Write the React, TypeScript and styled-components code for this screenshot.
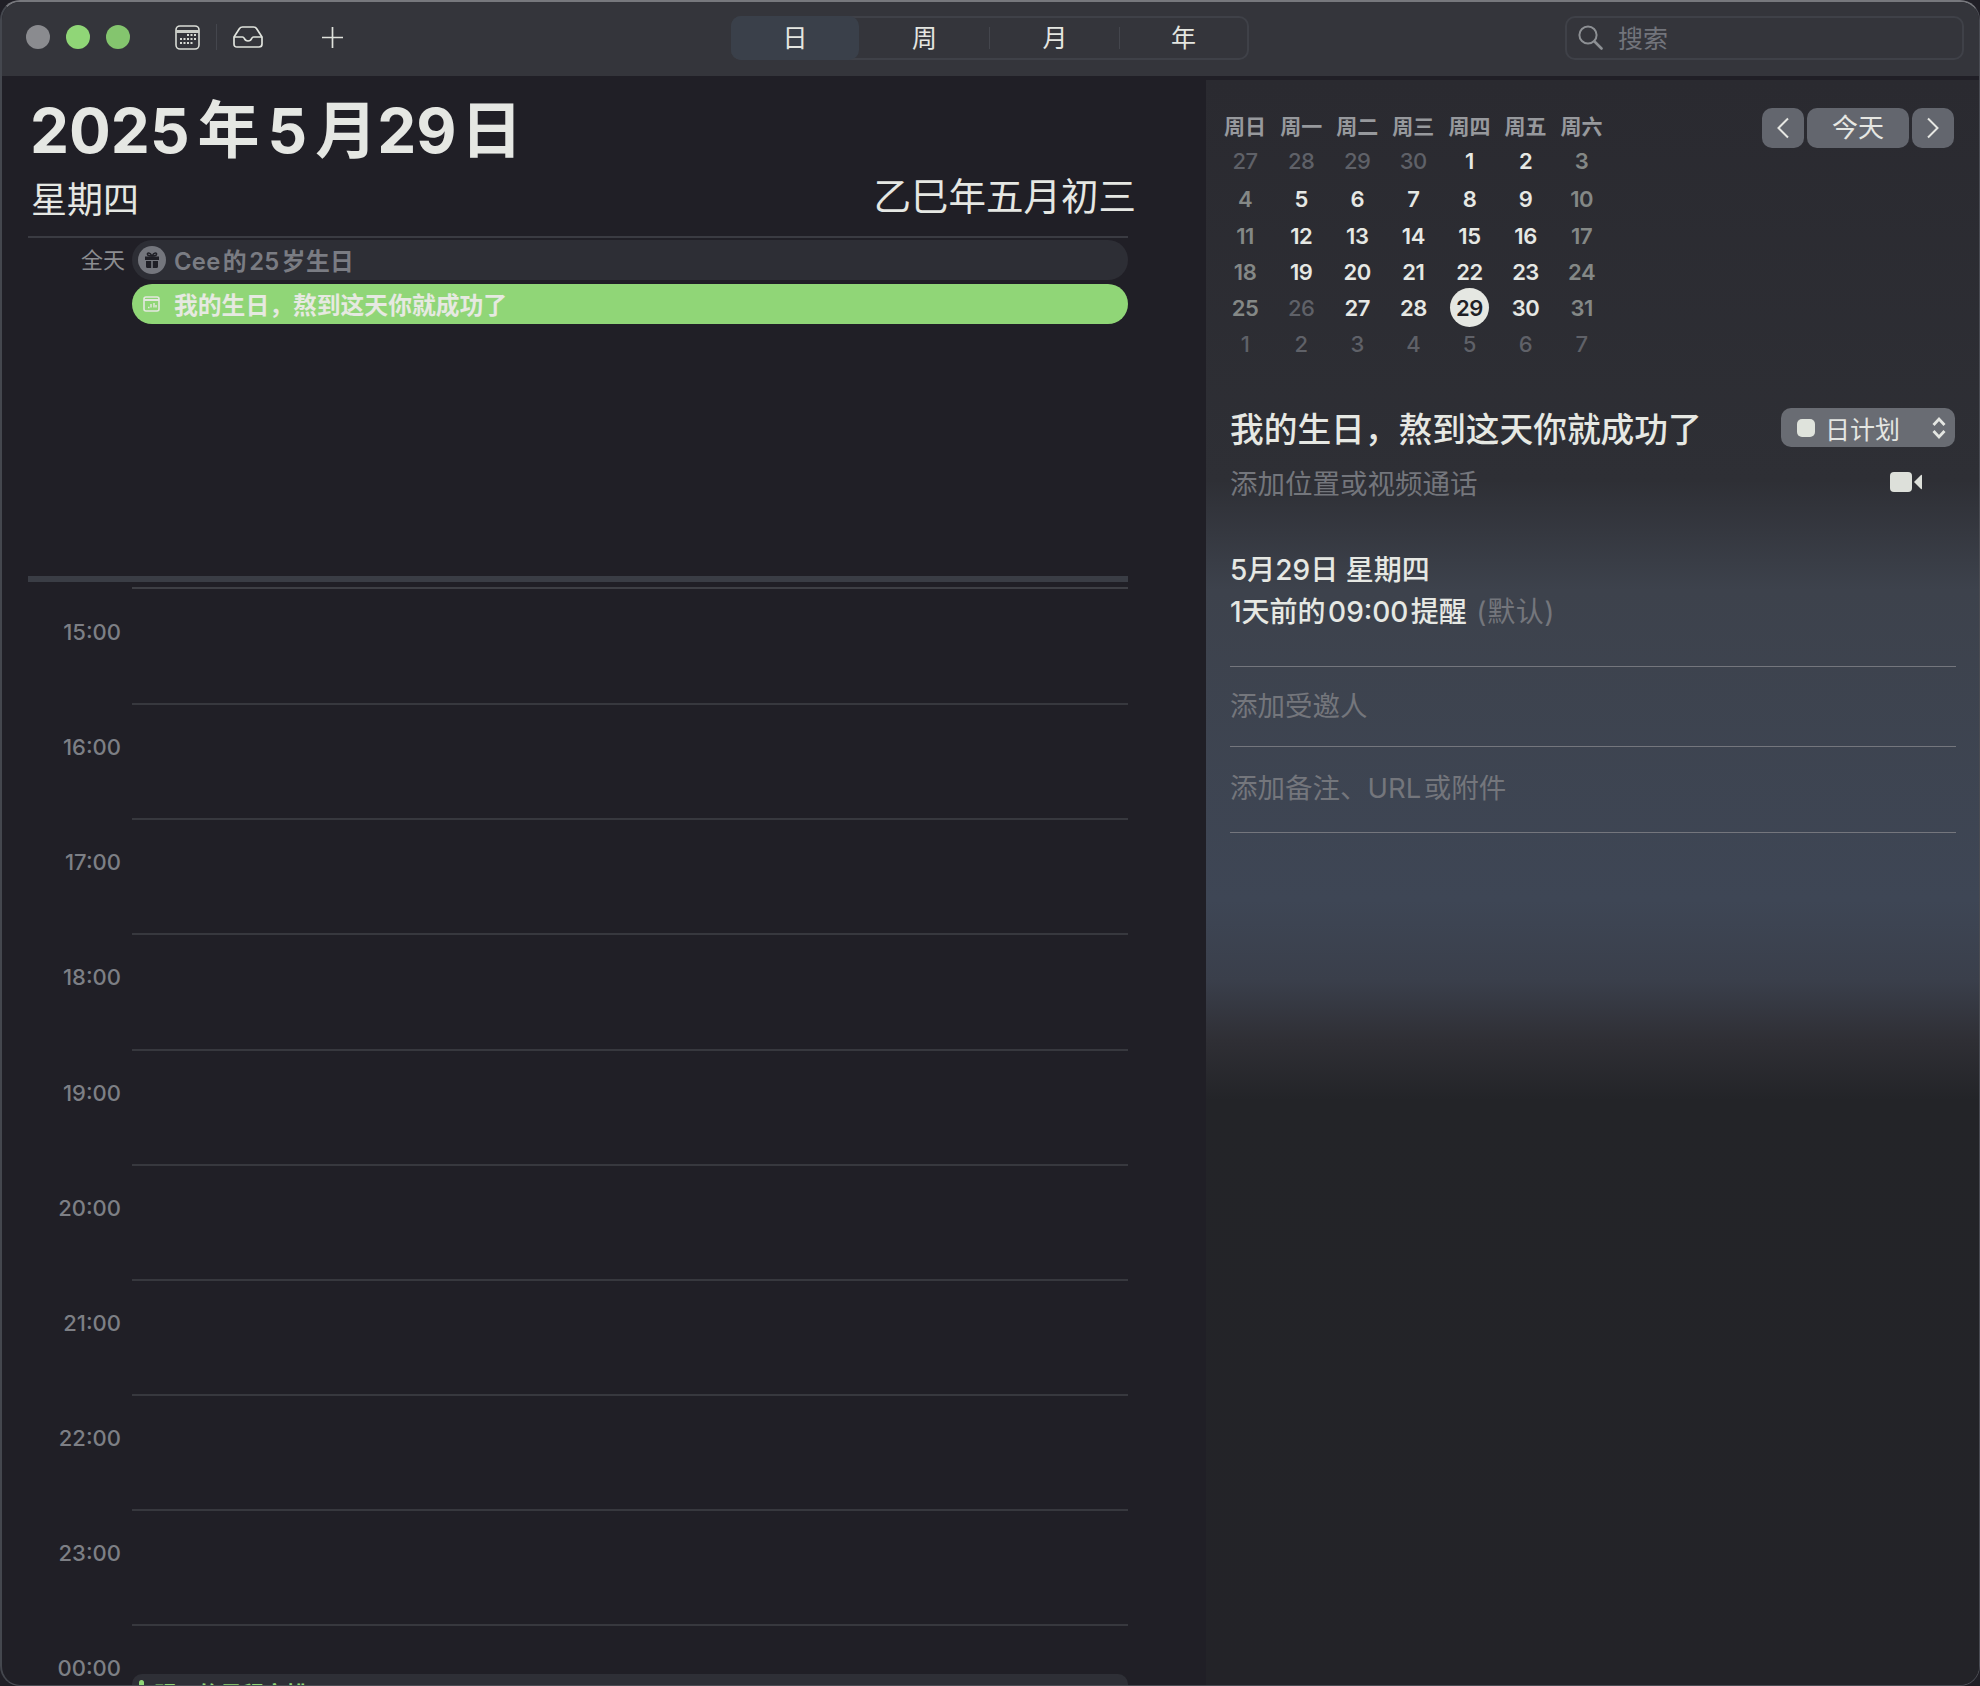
import React from "react";
import styled, { createGlobalStyle } from "styled-components";

const Global = createGlobalStyle`
  html, body { margin: 0; padding: 0; background: #201f26; }
  body { font-family: Inter, "Noto Sans CJK SC", sans-serif; }
  * { box-sizing: border-box; }
`;

const Win = styled.div`
  width: 1980px;
  height: 1686px;
  overflow: hidden;
  display: flex;
  flex-direction: column;
  background: #201f26;
  border-style: solid;
  border-width: 2px 1px 1px 2px;
  border-color: #77787d #4a4c53 #4a4c53 #44474e;
  border-radius: 20px;
`;

const TitleBar = styled.header`
  height: 74px;
  flex: none;
  display: grid;
  grid-template-columns: 729px 518px 1fr;
  align-items: start;
  padding-top: 14px;
  background: #34353b;
`;
const LeftTools = styled.div`
  display: flex;
  align-items: center;
  height: 44px;
  padding: 0 0 2px 24px;
`;
const Dot = styled.span<{ $c: string }>`
  width: 24px;
  height: 24px;
  border-radius: 50%;
  margin-right: 16px;
  background: ${(p) => p.$c};
`;
const ToolIcon = styled.svg<{ $ml: number }>`
  margin-left: ${(p) => p.$ml}px;
  flex: none;
  display: block;
`;
const ToolSep = styled.span`
  width: 1px;
  height: 26px;
  margin-left: 16px;
  background: #44464d;
`;
const Segments = styled.nav`
  display: grid;
  grid-template-columns: 126px 131px 130px 1fr;
  height: 44px;
  border: 2px solid #3f4148;
  border-radius: 10px;
`;
const Segment = styled.div<{ $active?: boolean; $sep?: boolean }>`
  display: flex;
  align-items: center;
  justify-content: center;
  padding-bottom: 4px;
  font-size: 25px;
  color: #e4e6e1;
  margin: ${(p) => (p.$active ? "-2px 0 -2px -2px" : "0")};
  background: ${(p) => (p.$active ? "#3a404a" : "transparent")};
  border-radius: ${(p) => (p.$active ? "10px" : "0")};
  position: relative;
  &::after {
    content: "";
    display: ${(p) => (p.$sep ? "block" : "none")};
    position: absolute;
    right: 0;
    top: 9px;
    height: 22px;
    width: 1px;
    background: #44464d;
  }
`;
const Search = styled.div`
  width: 399px;
  height: 44px;
  margin-left: 316px;
  display: flex;
  align-items: center;
  gap: 15px;
  padding: 0 0 2px 10px;
  border: 2px solid #3f4148;
  border-radius: 10px;
  color: #72747b;
  font-size: 25px;
`;

const Body = styled.main`
  flex: 1;
  display: flex;
  min-height: 0;
`;
const LeftPane = styled.section`
  width: 1204px;
  flex: none;
  padding-left: 26px;
  overflow: hidden;
`;
const DateTitle = styled.h1`
  margin: 19px 0 0;
  height: 72px;
  padding-left: 2px;
  font-size: 62px;
  line-height: 72px;
  font-weight: 700;
  color: #e5e7e3;
  white-space: nowrap;
`;
const TitleCjk = styled.span<{ $l: number; $r: number }>`
  margin: 0 ${(p) => p.$r}px 0 ${(p) => p.$l}px;
`;
const SubRow = styled.div`
  width: 1108px;
  height: 48px;
  margin-top: 6px;
  padding-left: 3px;
  display: flex;
  align-items: center;
  justify-content: space-between;
  color: #e5e7e3;
`;
const Weekday = styled.span`
  font-size: 36px;
  line-height: 48px;
  padding-top: 6px;
`;
const Lunar = styled.span`
  font-size: 37.5px;
  line-height: 48px;
`;
const Rule = styled.div`
  width: 1100px;
  height: 2px;
  margin-top: 15px;
  background: #3a3b42;
`;
const AllDay = styled.div`
  width: 1100px;
  height: 338px;
  padding-top: 2px;
  display: grid;
  grid-template-columns: 104px 1fr;
  grid-auto-rows: 40px;
  row-gap: 4px;
`;
const AllDayLabel = styled.div`
  padding-right: 7px;
  text-align: right;
  font-size: 22px;
  line-height: 40px;
  color: #8b8d91;
`;
const Pill = styled.div<{ $green?: boolean }>`
  grid-column: 2;
  display: flex;
  align-items: center;
  height: 40px;
  border-radius: 20px;
  padding-left: ${(p) => (p.$green ? "11px" : "6px")};
  gap: ${(p) => (p.$green ? "14px" : "8px")};
  background: ${(p) => (p.$green ? "#90d677" : "#2d2e35")};
  color: ${(p) => (p.$green ? "#e6e9e1" : "#7a7c83")};
  font-size: 23.8px;
  font-weight: 600;
  letter-spacing: ${(p) => (p.$green ? "0" : "0.3px")};
  white-space: nowrap;
`;
const PillText = styled.span`
  position: relative;
  top: -1px;
`;
const HeavyRule = styled.div`
  width: 1100px;
  height: 6px;
  background: #3a3d45;
`;
const ThinRule = styled.div`
  width: 996px;
  height: 2px;
  margin: 5px 0 1px 104px;
  background: #3e3f45;
`;
const HourRow = styled.div`
  width: 1100px;
  height: 115.15px;
  flex: none;
  display: grid;
  grid-template-columns: 104px 1fr;
`;
const HourLabel = styled.div`
  padding: 28px 11px 0 0;
  text-align: right;
  font-size: 22px;
  font-weight: 500;
  line-height: 28px;
  color: #7d7f85;
`;
const HourSlot = styled.div`
  border-bottom: 2px solid #37383e;
`;
const LastSlot = styled.div`
  padding-top: 48px;
`;
const ClippedEvent = styled.div`
  height: 60px;
  padding: 6px 0 0 7px;
  display: flex;
  gap: 10px;
  border-radius: 10px;
  background: #2e2f36;
  color: #90d677;
  font-size: 22px;
  font-weight: 600;
  line-height: 28px;
`;
const EventMark = styled.span`
  width: 5px;
  height: 40px;
  border-radius: 3px;
  background: #90d677;
`;

const RightPane = styled.aside`
  flex: 1;
  margin-top: 4px;
  padding: 28px 25px 0 24px;
  background: linear-gradient(
    180deg,
    #2a2a30 0,
    #2e2f35 400px,
    #3d424c 510px,
    #3e4655 820px,
    #3a3f4b 900px,
    #2f2f35 960px,
    #232428 1020px,
    #232328 1606px
  );
`;
const TopRow = styled.div`
  display: flex;
  justify-content: space-between;
  height: 299px;
  margin-left: -13px;
`;
const MiniCal = styled.div`
  display: grid;
  grid-template-columns: repeat(7, 56.1px);
  grid-template-rows: 33px 39.5px 37px 36px 36px 36px 36px;
  align-self: start;
`;
const WeekHead = styled.div`
  display: flex;
  align-items: center;
  justify-content: center;
  font-size: 21px;
  font-weight: 600;
  color: #97999d;
  white-space: nowrap;
`;
const DayCell = styled.div<{ $tone: "dim" | "side" | "main" | "today" }>`
  display: flex;
  align-items: center;
  justify-content: center;
  font-size: 22px;
  font-weight: ${(p) => (p.$tone === "dim" ? 500 : 600)};
  letter-spacing: -0.5px;
  color: ${(p) =>
    p.$tone === "dim" ? "#5f6168" : p.$tone === "side" ? "#848886" : p.$tone === "today" ? "#1f1f26" : "#e6e8e4"};
`;
const TodayRing = styled.span`
  width: 39px;
  height: 39px;
  border-radius: 50%;
  background: #e5e7e2;
  display: flex;
  align-items: center;
  justify-content: center;
`;
const NavGroup = styled.div`
  display: flex;
  gap: 3px;
  height: 40px;
`;
const NavButton = styled.div<{ $wide?: boolean }>`
  width: ${(p) => (p.$wide ? "102px" : "42px")};
  height: 40px;
  border-radius: 10px;
  background: #63666e;
  color: #e6e7e3;
  font-size: 26px;
  padding-bottom: ${(p) => (p.$wide ? "5px" : "0")};
  display: flex;
  align-items: center;
  justify-content: center;
`;
const EventTitleRow = styled.div`
  display: flex;
  justify-content: space-between;
  align-items: center;
  height: 41px;
`;
const EventTitle = styled.h2`
  margin: 0;
  font-size: 33.7px;
  font-weight: 500;
  color: #e6e8e3;
  white-space: nowrap;
`;
const CalendarSelect = styled.div`
  width: 174px;
  height: 39px;
  margin-right: -1px;
  padding: 0 8px 0 16px;
  display: flex;
  align-items: center;
  border-radius: 10px;
  background: #696c73;
  color: #e4e6e2;
  font-size: 25px;
`;
const ColorSwatch = styled.span`
  width: 18px;
  height: 18px;
  border-radius: 5px;
  background: #dfe3dc;
  margin-right: 10px;
`;
const Chevrons = styled.svg`
  margin-left: auto;
  flex: none;
`;
const Placeholder = styled.div<{ $lift?: number }>`
  font-size: 27.5px;
  color: #74767c;
  white-space: nowrap;
  padding-bottom: ${(p) => p.$lift ?? 0}px;
`;
const LocationRow = styled.div`
  display: flex;
  justify-content: space-between;
  align-items: center;
  height: 50px;
  margin-top: 9px;
  padding-right: 32px;
`;
const WhenBlock = styled.div`
  height: 160px;
  padding-top: 42px;
  margin-right: -2px;
  border-bottom: 1px solid #74767d;
`;
const WhenLine = styled.div`
  height: 42px;
  line-height: 42px;
  font-size: 28px;
  font-weight: 500;
  color: #e6e8e3;
  white-space: nowrap;
`;
const WhenNote = styled.span`
  margin-left: 2px;
  font-weight: 400;
  letter-spacing: 0.6px;
  color: #74767c;
`;
const FieldRow = styled.div<{ $h: number }>`
  height: ${(p) => p.$h}px;
  margin-right: -2px;
  display: flex;
  align-items: center;
  border-bottom: 1px solid #74767d;
`;

const weeks = ["周日", "周一", "周二", "周三", "周四", "周五", "周六"];
const grid: number[] = [27, 28, 29, 30, 1, 2, 3, 4, 5, 6, 7, 8, 9, 10, 11, 12, 13, 14, 15, 16, 17, 18, 19, 20, 21, 22, 23, 24, 25, 26, 27, 28, 29, 30, 31, 1, 2, 3, 4, 5, 6, 7];
const toneOf = (i: number): "dim" | "side" | "main" | "today" => {
  if (i < 4 || i >= 35 || i === 29) return "dim";
  if (i === 32) return "today";
  if (i % 7 === 0 || i % 7 === 6) return "side";
  return "main";
};
const hours = ["15:00", "16:00", "17:00", "18:00", "19:00", "20:00", "21:00", "22:00", "23:00"];

export default function App() {
  return (
    <Win>
      <Global />
      <TitleBar>
        <LeftTools>
          <Dot $c="#8a8b8f" />
          <Dot $c="#90d677" />
          <Dot $c="#84c56e" />
          <ToolIcon $ml={29} width="25" height="25" viewBox="0 0 25 25" fill="none">
            <rect x="1" y="1" width="23" height="23" rx="4" stroke="#d9dcd6" strokeWidth="1.6" />
            <path d="M1 6.5h23" stroke="#c9ccc6" strokeWidth="3" />
            {[[13, 10], [16.5, 10], [20, 10], [6, 14], [9.5, 14], [13, 14], [16.5, 14], [20, 14], [6, 18], [9.5, 18], [13, 18], [16.5, 18]].map(([x, y]) => (
              <rect key={`${x}-${y}`} x={x - 1} y={y - 1} width="2" height="2" fill="#d8dbd5" />
            ))}
          </ToolIcon>
          <ToolSep />
          <ToolIcon $ml={16} width="30" height="22" viewBox="0 0 30 22" fill="none">
            <path d="M1 11 6.5 2.5Q7.5 1 9.5 1h11q2 0 3 1.5L29 11v7q0 3-3 3H4q-3 0-3-3z" stroke="#e0e3dd" strokeWidth="1.7" strokeLinejoin="round" />
            <path d="M1 11h8.500q1.200 0 1.700 1.300Q12.300 15 15 15t3.800-2.700q.5-1.300 1.700-1.300H29" stroke="#e0e3dd" strokeWidth="1.7" />
          </ToolIcon>
          <ToolIcon $ml={59} width="21" height="21" viewBox="0 0 21 21" fill="none">
            <path d="M10.5 0v21M0 10.5h21" stroke="#dfe2dc" strokeWidth="1.7" />
          </ToolIcon>
        </LeftTools>
        <Segments>
          <Segment $active>日</Segment>
          <Segment $sep>周</Segment>
          <Segment $sep>月</Segment>
          <Segment>年</Segment>
        </Segments>
        <Search>
          <svg width="26" height="26" viewBox="0 0 26 26" fill="none">
            <circle cx="11" cy="11" r="8.6" stroke="#8d9094" strokeWidth="2" />
            <path d="M17.5 17.5 24.5 24.5" stroke="#8d9094" strokeWidth="2.6" strokeLinecap="round" />
          </svg>
          <span>搜索</span>
        </Search>
      </TitleBar>
      <Body>
        <LeftPane>
          <DateTitle>
            2025<TitleCjk $l={8} $r={8}>年</TitleCjk>5<TitleCjk $l={8} $r={0}>月</TitleCjk>29<TitleCjk $l={4} $r={0}>日</TitleCjk>
          </DateTitle>
          <SubRow>
            <Weekday>星期四</Weekday>
            <Lunar>乙巳年五月初三</Lunar>
          </SubRow>
          <Rule />
          <AllDay>
            <AllDayLabel>全天</AllDayLabel>
            <Pill>
              <svg width="28" height="28" viewBox="0 0 28 28">
                <circle cx="14" cy="14" r="14" fill="#74767d" />
                <path d="M7 10.5h14v3.500H7zM8 15h5.200v7H9.500Q8 22 8 20.500zM14.800 15H20v5.500Q20 22 18.500 22h-3.700z" fill="#1f1f26" />
                <path d="M14 10C12 6 9 6.500 9.500 8.500 10 10 12.500 10 14 10c1.500 0 4 0 4.500-1.500C19 6.500 16 6 14 10z" fill="none" stroke="#1f1f26" strokeWidth="1.500" />
              </svg>
              <PillText>Cee&#8202;的&#8202;25&#8202;岁生日</PillText>
            </Pill>
            <Pill $green>
              <svg width="17" height="16" viewBox="0 0 17 16" fill="none">
                <rect x="1" y="1" width="15" height="14" rx="2" stroke="#e4e8e0" strokeWidth="1.600" />
                <path d="M1 4h15" stroke="#e4e8e0" strokeWidth="2" />
                <path d="M5 11.500h1.500M8 8v3.500M11 7v4.500M13 9v2.500" stroke="#e4e8e0" strokeWidth="1.400" />
              </svg>
              <PillText>我的生日，熬到这天你就成功了</PillText>
            </Pill>
          </AllDay>
          <HeavyRule />
          <ThinRule />
          {hours.map((h) => (
            <HourRow key={h}>
              <HourLabel>{h}</HourLabel>
              <HourSlot />
            </HourRow>
          ))}
          <HourRow>
            <HourLabel>00:00</HourLabel>
            <LastSlot>
              <ClippedEvent>
                <EventMark />
                <span>明天的日程安排</span>
              </ClippedEvent>
            </LastSlot>
          </HourRow>
        </LeftPane>
        <RightPane>
          <TopRow>
            <MiniCal>
              {weeks.map((w) => (
                <WeekHead key={w}>{w}</WeekHead>
              ))}
              {grid.map((d, i) => (
                <DayCell key={i} $tone={toneOf(i)}>
                  {i === 32 ? <TodayRing>{d}</TodayRing> : d}
                </DayCell>
              ))}
            </MiniCal>
            <NavGroup>
              <NavButton>
                <svg width="14" height="22" viewBox="0 0 14 22" fill="none">
                  <path d="M12 1.500 2.500 11 12 20.500" stroke="#e6e7e3" strokeWidth="2" />
                </svg>
              </NavButton>
              <NavButton $wide>今天</NavButton>
              <NavButton>
                <svg width="14" height="22" viewBox="0 0 14 22" fill="none">
                  <path d="M2 1.500 11.500 11 2 20.500" stroke="#e6e7e3" strokeWidth="2" />
                </svg>
              </NavButton>
            </NavGroup>
          </TopRow>
          <EventTitleRow>
            <EventTitle>我的生日，熬到这天你就成功了</EventTitle>
            <CalendarSelect>
              <ColorSwatch />
              <span>日计划</span>
              <Chevrons width="16" height="26" viewBox="0 0 16 26" fill="none">
                <path d="M2.500 10 8 4 13.500 10M2.500 16 8 22 13.500 16" stroke="#e4e6e2" strokeWidth="2.800" />
              </Chevrons>
            </CalendarSelect>
          </EventTitleRow>
          <LocationRow>
            <Placeholder>添加位置或视频通话</Placeholder>
            <svg width="32" height="20" viewBox="0 0 32 20">
              <rect width="22" height="20" rx="4" fill="#dde0da" />
              <path d="M24 10 31 3q1-1 1 1v12q0 2-1 1z" fill="#dde0da" />
            </svg>
          </LocationRow>
          <WhenBlock>
            <WhenLine>5月29日 星期四</WhenLine>
            <WhenLine>
              1天前的&#8202;09:00&#8202;提醒 <WhenNote>(默认)</WhenNote>
            </WhenLine>
          </WhenBlock>
          <FieldRow $h={80}>
            <Placeholder $lift={6}>添加受邀人</Placeholder>
          </FieldRow>
          <FieldRow $h={86}>
            <Placeholder $lift={8}>添加备注、URL&#8202;或附件</Placeholder>
          </FieldRow>
        </RightPane>
      </Body>
    </Win>
  );
}
